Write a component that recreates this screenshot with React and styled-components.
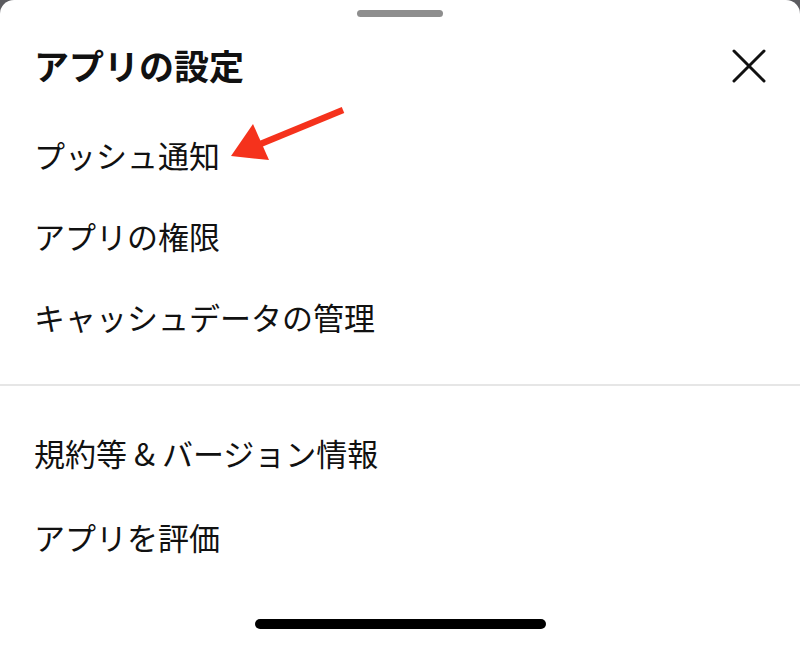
import React from 'react';
import styled, { createGlobalStyle } from 'styled-components';

const GlobalStyle = createGlobalStyle`
  html, body {
    margin: 0;
    padding: 0;
    background: #5c5c60;
  }
  body {
    font-family: "Noto Sans CJK JP", "Noto Sans", sans-serif;
    color: #111;
  }
`;

const Sheet = styled.div`
  position: relative;
  width: 800px;
  height: 646px;
  background: #fff;
  border-radius: 14px 14px 0 0;
  overflow: hidden;
  display: flex;
  flex-direction: column;
`;

const Handle = styled.div`
  align-self: center;
  width: 86px;
  height: 7px;
  margin-top: 10px;
  border-radius: 4px;
  background: #8e8e8e;
`;

const Header = styled.div`
  height: 97px;
  display: flex;
  align-items: center;
  justify-content: space-between;
  padding: 0 34px 0 34px;
`;

const Title = styled.h1`
  margin: -3px 0 0;
  font-size: 35px;
  font-weight: 700;
  letter-spacing: 0;
  color: #111;
`;

const CloseButton = styled.button`
  width: 34px;
  height: 34px;
  padding: 0;
  border: none;
  background: none;
  display: flex;
  align-items: center;
  justify-content: center;
`;

const Group = styled.div`
  display: flex;
  flex-direction: column;
  padding: ${p => p.$pad};
`;

const Item = styled.div`
  height: ${p => p.$h}px;
  display: flex;
  align-items: center;
  padding-left: 34px;
  font-size: 31px;
  font-weight: 400;
  color: #111;
`;

const Divider = styled.div`
  height: 2px;
  background: #e6e6e6;
`;

const HomeIndicator = styled.div`
  position: absolute;
  left: 255px;
  top: 619px;
  width: 291px;
  height: 10px;
  border-radius: 5px;
  background: #000;
`;

const Annotation = styled.svg`
  position: absolute;
  left: 0;
  top: 0;
  pointer-events: none;
`;

export default function App() {
  return (
    <>
      <GlobalStyle />
      <Sheet>
        <Handle />
        <Header>
          <Title>アプリの設定</Title>
          <CloseButton aria-label="閉じる">
            <svg width="34" height="34" viewBox="0 0 34 34">
              <path d="M2 2 L32 32 M32 2 L2 32" stroke="#111" strokeWidth="3" strokeLinecap="round" />
            </svg>
          </CloseButton>
        </Header>
        <Group $pad="0 0 27px">
          <Item $h={81}>プッシュ通知</Item>
          <Item $h={81}>アプリの権限</Item>
          <Item $h={81}>キャッシュデータの管理</Item>
        </Group>
        <Divider />
        <Group $pad="24px 0 0">
          <Item $h={84}>規約等 &amp; バージョン情報</Item>
          <Item $h={84}>アプリを評価</Item>
        </Group>
        <HomeIndicator />
        <Annotation width="800" height="646" viewBox="0 0 800 646">
          <path d="M343 110 L258 145" stroke="#f5321c" strokeWidth="6.5" strokeLinecap="butt" />
          <polygon points="231,156 253,124 269,160" fill="#f5321c" />
        </Annotation>
      </Sheet>
    </>
  );
}
